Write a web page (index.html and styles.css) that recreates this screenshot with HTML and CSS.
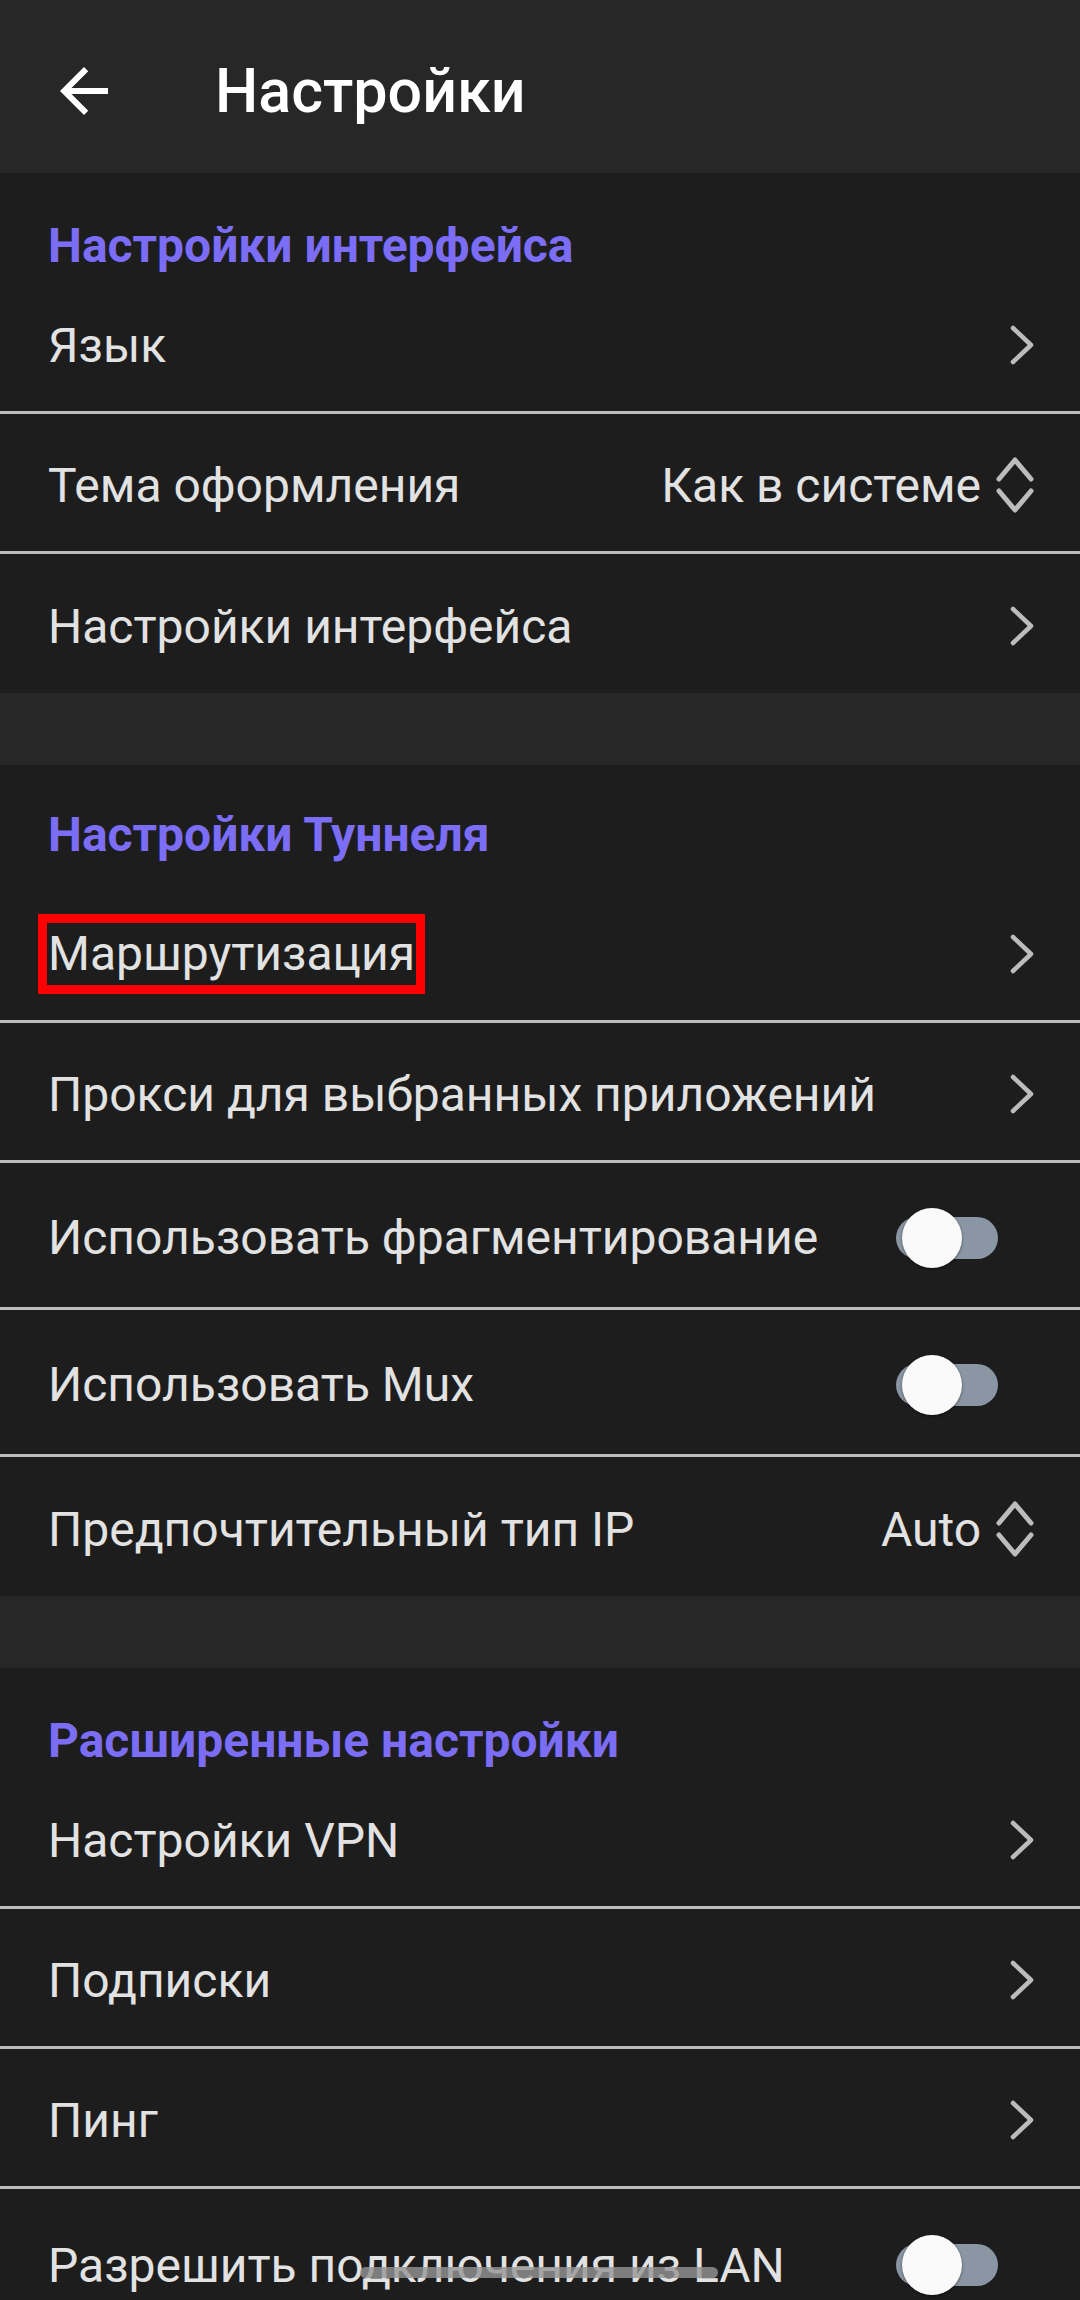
FILE: index.html
```html
<!DOCTYPE html>
<html lang="ru">
<head>
    <meta charset="UTF-8">
    <meta name="viewport" content="width=device-width, initial-scale=1.0">
    <title>Настройки</title>
<link rel="stylesheet" href="styles.css">
</head>
<body>
    <div class="screen">
        <header class="topbar">
            <svg class="back" viewBox="0 0 24 24" width="72" height="72">
                <path d="M20 11H7.83l5.59-5.59L12 4l-8 8 8 8 1.41-1.41L7.83 13H20v-2z" fill="#fff"/>
            </svg>
            <h1>Настройки</h1>
        </header>

        <!-- interface -->
        <section class="group first">
            <h2>Настройки интерфейса</h2>
            <div class="row">
                <span class="label">Язык</span>
                <svg class="chevron" viewBox="0 0 26 40" width="26" height="40"><polyline points="4,3 22,20 4,37"/></svg>
            </div>
            <div class="row">
                <span class="label">Тема оформления</span>
                <span class="value">Как в системе</span>
                <svg class="updown" viewBox="0 0 40 58" width="40" height="58"><polyline points="4,23 20,4 36,23"/><polyline points="4,35 20,54 36,35"/></svg>
            </div>
            <div class="row">
                <span class="label">Настройки интерфейса</span>
                <svg class="chevron" viewBox="0 0 26 40" width="26" height="40"><polyline points="4,3 22,20 4,37"/></svg>
            </div>
        </section>

        <div class="spacer"></div>

        <!-- tunnel -->
        <section class="group tunnel">
            <h2>Настройки Туннеля</h2>
            <div class="row">
                <span class="label"><span class="mark">Маршрутизация</span></span>
                <svg class="chevron" viewBox="0 0 26 40" width="26" height="40"><polyline points="4,3 22,20 4,37"/></svg>
            </div>
            <div class="row">
                <span class="label">Прокси для выбранных приложений</span>
                <svg class="chevron" viewBox="0 0 26 40" width="26" height="40"><polyline points="4,3 22,20 4,37"/></svg>
            </div>
            <div class="row tall">
                <span class="label">Использовать фрагментирование</span>
                <div class="switch"><span class="track"></span><span class="knob"></span></div>
            </div>
            <div class="row tall">
                <span class="label">Использовать Mux</span>
                <div class="switch"><span class="track"></span><span class="knob"></span></div>
            </div>
            <div class="row">
                <span class="label">Предпочтительный тип IP</span>
                <span class="value">Auto</span>
                <svg class="updown" viewBox="0 0 40 58" width="40" height="58"><polyline points="4,23 20,4 36,23"/><polyline points="4,35 20,54 36,35"/></svg>
            </div>
        </section>

        <div class="spacer"></div>

        <!-- advanced -->
        <section class="group">
            <h2>Расширенные настройки</h2>
            <div class="row">
                <span class="label">Настройки VPN</span>
                <svg class="chevron" viewBox="0 0 26 40" width="26" height="40"><polyline points="4,3 22,20 4,37"/></svg>
            </div>
            <div class="row">
                <span class="label">Подписки</span>
                <svg class="chevron" viewBox="0 0 26 40" width="26" height="40"><polyline points="4,3 22,20 4,37"/></svg>
            </div>
            <div class="row">
                <span class="label">Пинг</span>
                <svg class="chevron" viewBox="0 0 26 40" width="26" height="40"><polyline points="4,3 22,20 4,37"/></svg>
            </div>
            <div class="row tall">
                <span class="label">Разрешить подключения из LAN</span>
                <div class="switch"><span class="track"></span><span class="knob"></span></div>
            </div>
        </section>

        <div class="homebar"></div>
    </div>
</body>
</html>
```

FILE: styles.css
```css
*{
    margin: 0;
    padding: 0;
    box-sizing: border-box;
}
body{
    background-color: #1d1d1d;
    font-family: Roboto, "Noto Sans", sans-serif;
}
.screen{
    position: relative;
    height: 2300px;
    overflow: hidden;
    background-color: #1d1d1d;
}

/* toolbar */
.topbar{
    display: flex;
    align-items: center;
    height: 173px;
    padding: 9px 0 0 48px;
    background-color: #272727;
}
.topbar h1{
    margin-left: 95px;
    font-size: 61px;
    font-weight: 500;
    color: #fff;
    line-height: 60px;
}

/* groups */
.group h2{
    padding: 45px 48px 0;
    font-size: 48px;
    font-weight: 700;
    line-height: 56px;
    color: #7b6df5;
}
.group.tunnel h2{
    padding-top: 42px;
    padding-bottom: 20px;
}
.spacer{
    height: 72px;
    background-color: #272727;
}

.row{
    display: flex;
    align-items: center;
    height: 140px;
    padding: 5px 45px 0 48px;
    border-bottom: 3px solid #bcbcbc;
    color: #e2e2e2;
    font-size: 48px;
}
.row:last-child{
    border-bottom: none;
    height: 139px;
}
.row.tall{
    height: 147px;
}
.row .label{
    flex: 1;
    white-space: nowrap;
}
.row .value{
    margin-right: 14px;
}
.mark{
    display: inline-block;
    line-height: 60px;
    outline: 9px solid #ff0000;
    outline-offset: 1px;
}

/* icons */
.chevron, .updown{
    fill: none;
    stroke: #bcbcbc;
    stroke-linecap: round;
    stroke-linejoin: round;
}
.chevron{
    stroke-width: 4.5;
}
.updown{
    stroke-width: 5;
}

/* switch */
.switch{
    position: relative;
    width: 102px;
    height: 60px;
    margin-right: 37px;
}
.switch .track{
    position: absolute;
    top: 9px;
    left: 0;
    width: 102px;
    height: 42px;
    border-radius: 21px;
    background-color: #8a96a3;
}
.switch .knob{
    position: absolute;
    top: 0;
    left: 6px;
    width: 60px;
    height: 60px;
    border-radius: 50%;
    background-color: #fafafa;
    box-shadow: 0 1px 3px rgba(0,0,0,0.45);
}

/* gesture bar */
.homebar{
    position: absolute;
    top: 2267px;
    left: 360px;
    width: 358px;
    height: 11px;
    border-radius: 6px;
    background-color: rgba(150,150,150,0.8);
}
```
